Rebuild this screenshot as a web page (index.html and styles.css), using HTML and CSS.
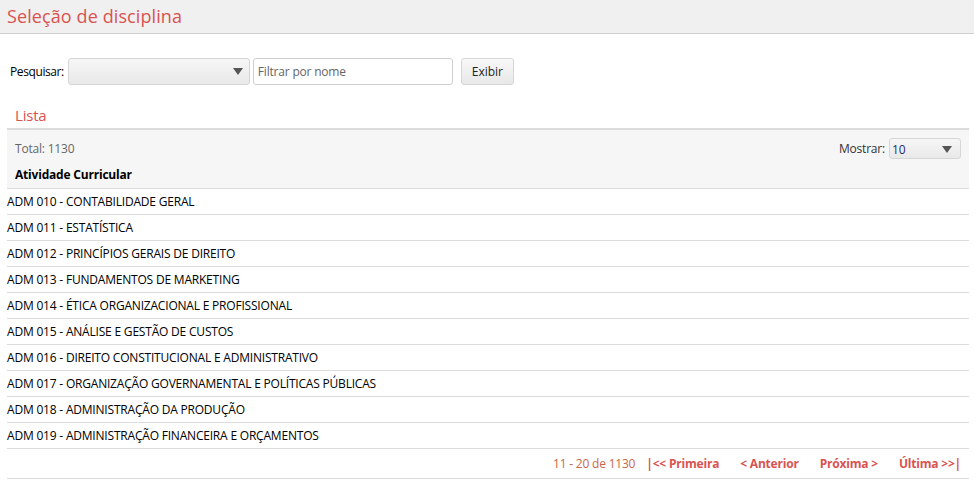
FILE: index.html
```html
<!DOCTYPE html>
<html lang="pt">
<head>
  <meta charset="UTF-8">
  <title>Seleção de disciplina</title>
  <link rel="stylesheet" href="styles.css">
</head>
<body>
  <div class="page-header">
    <h1>Seleção de disciplina</h1>
  </div>

  <div class="search">
    <label>Pesquisar:</label>
    <div class="select wide"><span></span><i class="arrow"></i></div>
    <input type="text" class="filter" placeholder="Filtrar por nome">
    <button class="btn">Exibir</button>
  </div>

  <div class="list">
    <h2>Lista</h2>
    <div class="list-head">
      <div class="list-top">
        <span class="total">Total: 1130</span>
        <span class="show">Mostrar: <span class="select small"><span>10</span><i class="arrow"></i></span></span>
      </div>
      <div class="col-title">Atividade Curricular</div>
    </div>
    <ul class="rows">
      <li>ADM 010 - CONTABILIDADE GERAL</li>
      <li>ADM 011 - ESTATÍSTICA</li>
      <li>ADM 012 - PRINCÍPIOS GERAIS DE DIREITO</li>
      <li>ADM 013 - FUNDAMENTOS DE MARKETING</li>
      <li>ADM 014 - ÉTICA ORGANIZACIONAL E PROFISSIONAL</li>
      <li>ADM 015 - ANÁLISE E GESTÃO DE CUSTOS</li>
      <li>ADM 016 - DIREITO CONSTITUCIONAL E ADMINISTRATIVO</li>
      <li>ADM 017 - ORGANIZAÇÃO GOVERNAMENTAL E POLÍTICAS PÚBLICAS</li>
      <li>ADM 018 - ADMINISTRAÇÃO DA PRODUÇÃO</li>
      <li>ADM 019 - ADMINISTRAÇÃO FINANCEIRA E ORÇAMENTOS</li>
    </ul>
    <div class="pager">
      <span class="range">11 - 20 de 1130</span>
      <a href="#">|&lt;&lt; Primeira</a>
      <a href="#">&lt; Anterior</a>
      <a href="#">Próxima &gt;</a>
      <a href="#">Última &gt;&gt;|</a>
    </div>
  </div>
</body>
</html>
```

FILE: styles.css
```css
* {
  box-sizing: border-box;
}
body {
  margin: 0;
  font-family: 'Open Sans', 'Noto Sans', sans-serif;
  font-size: 12px;
  letter-spacing: -0.2px;
  color: #000;
  background: #fff;
}
.page-header {
  background: #f0f0f0;
  border-bottom: 1px solid #cfcfcf;
  height: 34px;
  padding: 0 7px;
}
.page-header h1 {
  margin: 0;
  font-weight: normal;
  font-size: 18px;
  line-height: 32px;
  color: #d9534f;
  letter-spacing: 0.1px;
}
.search {
  display: flex;
  align-items: center;
  padding: 24px 10px 0;
}
.search label {
  margin-right: 4px;
  letter-spacing: -0.4px;
}
.select {
  display: inline-flex;
  align-items: center;
  justify-content: space-between;
  border: 1px solid #d6d6d6;
  border-radius: 3px;
  background: linear-gradient(#f6f6f6, #e9e9e9);
}
.select.wide {
  width: 182px;
  height: 27px;
  padding: 0 6px;
}
.arrow {
  width: 0;
  height: 0;
  border-left: 5px solid transparent;
  border-right: 5px solid transparent;
  border-top: 7px solid #555;
}
.filter {
  width: 200px;
  height: 27px;
  margin-left: 3px;
  border: 1px solid #cfcfcf;
  border-radius: 3px;
  padding: 0 4px;
  font-family: inherit;
  font-size: 12px;
  letter-spacing: -0.2px;
}
.filter::placeholder {
  color: #666;
}
.btn {
  margin-left: 8px;
  width: 53px;
  height: 27px;
  border: 1px solid #d6d6d6;
  border-radius: 3px;
  background: linear-gradient(#f8f8f8, #e8e8e8);
  font-family: inherit;
  font-size: 12px;
  color: #222;
}
.list {
  padding: 0 5px 0 7px;
}
.list h2 {
  margin: 0;
  padding: 20px 8px 0;
  font-weight: normal;
  font-size: 15px;
  line-height: 20px;
  height: 43px;
  color: #d9534f;
}
.list-head {
  background: #f6f6f6;
  border-top: 2px solid #dcdcdc;
  border-bottom: 1px solid #dcdcdc;
  padding: 0 8px;
}
.list-top {
  display: flex;
  align-items: center;
  justify-content: space-between;
  height: 36px;
}
.total {
  color: #666;
}
.show {
  display: flex;
  align-items: center;
  color: #333;
}
.select.small {
  width: 72px;
  height: 21px;
  margin-left: 4px;
  padding: 2px 8px 0 2px;
  color: #2a2a6a;
  align-items: flex-end;
}
.select.small .arrow {
  align-self: center;
}
.col-title {
  font-weight: bold;
  height: 22px;
  line-height: 18px;
}
.rows {
  list-style: none;
  margin: 0;
  padding: 0;
}
.rows li {
  height: 26px;
  line-height: 25px;
  border-bottom: 1px solid #dcdcdc;
}
.pager {
  display: flex;
  justify-content: flex-end;
  align-items: center;
  gap: 21px;
  height: 30px;
  padding-right: 8px;
  border-bottom: 1px solid #dcdcdc;
}
.pager .range {
  color: #c8674a;
  margin-right: -10px;
}
.pager a {
  color: #d9534f;
  font-weight: bold;
  text-decoration: none;
}
```
